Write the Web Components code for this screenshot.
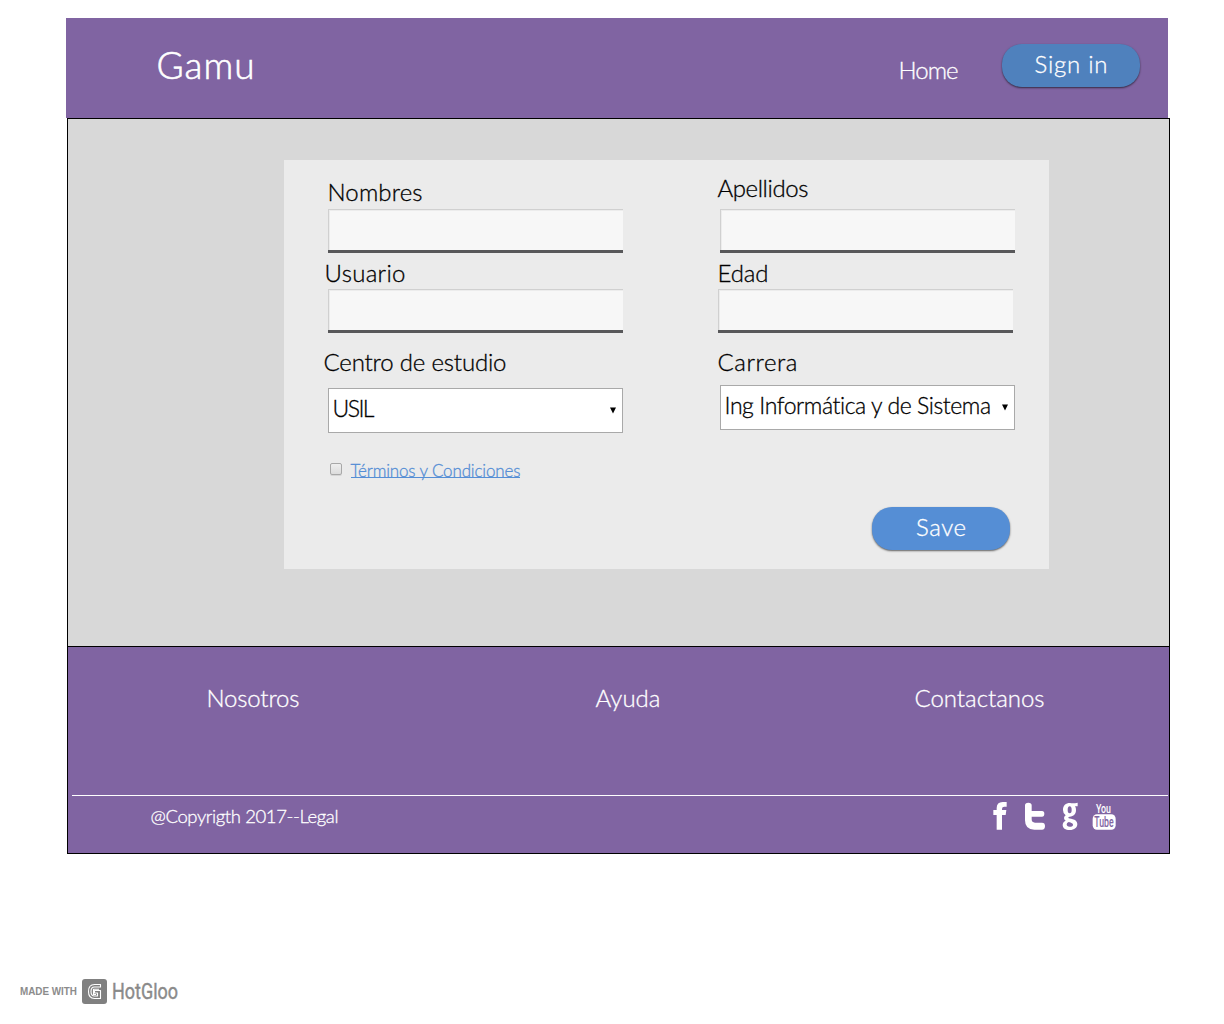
<!DOCTYPE html>
<html lang="es">
<head>
<meta charset="utf-8">
<title>Gamu</title>
<style>
html,body{margin:0;background:#fff}
body{width:1224px;height:1024px;overflow:hidden;font-family:Lato,"Open Sans",sans-serif;font-weight:300}
</style>
</head>
<body>
<gamu-page></gamu-page>
<script>
const define = (name, html, after) => customElements.define(name, class extends HTMLElement {
  connectedCallback() {
    if (this.shadowRoot) return;
    const t = document.createElement('template');
    t.innerHTML = html;
    this.attachShadow({mode:'open'}).append(t.content.cloneNode(true));
    if (after) after(this, this.shadowRoot);
  }
});

// A single line of text spread over the width given in "w".
define('fit-text', `<style>
:host{display:block;height:30px;line-height:30px;white-space:pre;font-size:24px;flex:none;-webkit-text-stroke:.3px currentColor}
:host([squeeze]){-webkit-text-stroke:0}
span{display:inline-block;transform-origin:0 50%}
</style><span><slot></slot></span>`, (host, root) => {
  const w = +host.getAttribute('w'), s = root.querySelector('span');
  if (host.hasAttribute('size')) host.style.fontSize = host.getAttribute('size') + 'px';
  host.style.width = w + 'px';
  const n = host.textContent.length, now = s.getBoundingClientRect().width;
  if (host.hasAttribute('squeeze')) s.style.transform = 'scaleX(' + w / now + ')';
  else { s.style.letterSpacing = (w + 1 - now) / (n - 1) + 'px'; s.style.marginLeft = '-.5px'; }
});

define('pill-button', `<style>
:host{display:flex;justify-content:center;width:138px;height:43px;border-radius:20px;background:var(--fill);color:#fff;box-shadow:0 1px 2px rgba(0,0,0,.6);flex:none;box-sizing:border-box;padding-top:5px}
</style><slot></slot>`);

define('line-input', `<style>
:host{display:block;width:295px;height:44px;flex:none}
div{box-sizing:border-box;height:44px;background:#f7f7f7;border-top:1px solid #d0d0d0;border-bottom:3px solid #58585a;box-shadow:inset 1px 0 0 #d0d0d0,inset 2px 1px 0 #ececec}
</style><div></div>`);

define('drop-select', `<style>
:host{display:flex;box-sizing:border-box;width:295px;height:45px;border:1px solid #a9a9a9;background:#fff;padding:4px 6px 0 4px;justify-content:space-between;flex:none}
svg{margin-top:14px}
</style><slot></slot><svg width="6" height="7"><path d="M0 .5H6L3 6.5Z" fill="#000"/></svg>`);

define('form-panel', `<style>
:host{display:flex;width:765px;height:409px;background:#ebebeb;color:#000}
.col{display:flex;flex-direction:column;align-items:flex-start}
.a{width:390px;padding-left:40px}
.b{width:295px;padding-left:4px}
.in{margin-left:4px}.in2{margin-left:2px}
.terms{display:flex;margin:22px 0 0 6px}
.box{width:10px;height:10px;border:1px solid #a8a8a8;border-radius:2px;background:linear-gradient(#efefef,#dcdcdc);margin:8px 9px 0 0;box-shadow:0 1px 0 #d5d5d5}
.link{color:#558ed5;height:22px;border-bottom:1px solid #558ed5}
.link fit-text{margin-top:1px}
.link{height:22px}
pill-button{--fill:#558ed5}
</style>
<div class="col a">
 <fit-text w="94" style="margin:17px 0 2px 4px">Nombres</fit-text>
 <line-input class="in"></line-input>
 <fit-text w="80" style="margin:5px 0 1px 1px">Usuario</fit-text>
 <line-input class="in"></line-input>
 <fit-text w="182" style="margin:14px 0 11px">Centro de estudio</fit-text>
 <drop-select class="in"><fit-text w="41" size="23">USIL</fit-text></drop-select>
 <div class="terms"><div class="box"></div><div class="link"><fit-text w="169" size="17">Términos y Condiciones</fit-text></div></div>
</div>
<div class="col b">
 <fit-text w="90" style="margin:13px 0 6px">Apellidos</fit-text>
 <line-input class="in2"></line-input>
 <fit-text w="50" style="margin:5px 0 1px">Edad</fit-text>
 <line-input></line-input>
 <fit-text w="79" style="margin:14px 0 8px">Carrera</fit-text>
 <drop-select class="in2"><fit-text w="266" size="23">Ing Informática y de Sistema</fit-text></drop-select>
 <pill-button style="margin:77px 0 0 154px"><fit-text w="49">Save</fit-text></pill-button>
</div>`);

define('top-bar', `<style>
:host{display:flex;align-items:flex-start;box-sizing:border-box;width:1102px;height:100px;margin:18px 0 0 66px;padding:26px 28px 0 91px;background:#8064a2;color:#fff}
.gap{flex:1}
pill-button{--fill:#4f81bd}
</style>
<fit-text w="97" size="37" style="margin-top:6px;-webkit-text-stroke-width:.6px">Gamu</fit-text><div class="gap"></div>
<fit-text w="59" style="margin:11px 44px 0 0">Home</fit-text>
<pill-button><fit-text w="72">Sign in</fit-text></pill-button>`);

define('social-icons', `<style>
:host{display:flex}svg{display:block;fill:#fff;flex:none;overflow:visible}
text{font-family:Roboto,"Liberation Sans",sans-serif;font-weight:500}
</style>
<svg width="16" height="32" viewBox="36 30 48 96"><path d="M50 119V75H40V60H50V54Q50 36 68 36H80V50H73Q66 50 66 57V60H79L77 75H66V119Z"/></svg>
<svg style="margin-left:16px" width="22" height="32" viewBox="132 30 66 96"><path d="M135 46Q135 38 145 38Q155 38 155 46V63H186Q193 63 193 71Q193 80 186 80H155V88Q155 98 165 98H186Q195 98 195 108Q195 119 186 119H163Q135 119 135 91Z"/></svg>
<svg style="margin-left:16px" width="17" height="32" viewBox="246 30 51 96"><path fill-rule="evenodd" d="M293 38V49H285Q288 53 288 60C288 72 281 79 269 80Q265 80 265 83C265 87 292 84 292 102C292 113 283 120 269 120C256 120 248 114 248 105Q248 96 257 92Q252 89 252 84Q252 79 257 76Q249 71 249 60C249 46 257 39 270 39Q280 41 293 38ZM269 49Q263 49 263 60Q263 70 269 70Q275 70 275 60Q275 49 269 49ZM266 96Q260 98 260 103Q260 110 269 110Q279 110 279 104Q279 99 266 96Z"/></svg>
<svg style="margin-left:12px" width="26" height="32" viewBox="333 30 78 96"><text x="348" y="68" font-size="41" textLength="45" lengthAdjust="spacingAndGlyphs">You</text><rect x="338" y="73" width="69" height="46" rx="13"/><text x="343" y="112" font-size="44" textLength="58" lengthAdjust="spacingAndGlyphs" fill="#8064a2">Tube</text></svg>`);

define('page-footer', `<style>
:host{display:block;box-sizing:border-box;width:1103px;height:208px;border:1px solid #000;background:#8064a2;color:#fff}
.links{display:flex;padding:36px 0 0 139px;height:112px}
.bottom{display:flex;justify-content:space-between;margin-left:4px;width:1096px;box-sizing:border-box;border-top:1px solid #fff;padding:4px 51px 0 79px}
</style>
<div class="links"><fit-text w="92">Nosotros</fit-text><fit-text w="64" style="margin-left:297px">Ayuda</fit-text><fit-text w="129" style="margin-left:255px">Contactanos</fit-text></div>
<div class="bottom"><fit-text w="187" size="18.5" style="margin-top:1px">@Copyrigth 2017--Legal</fit-text><social-icons></social-icons></div>`);

define('made-with', `<style>
:host{display:flex;margin:125px 0 0 20px;height:25px;color:#8c8c8c;font-family:"Liberation Sans",sans-serif;font-weight:700}
svg{display:block;margin:0 5px}
.name{font-family:Roboto,sans-serif;font-weight:400;-webkit-text-stroke:.4px #868686}
</style>
<fit-text w="57" size="10" squeeze style="margin-top:-2px">MADE WITH</fit-text>
<svg width="25" height="25" viewBox="0 0 25 25"><rect width="25" height="25" rx="3" fill="#808080"/><g fill="none" stroke="#fff" stroke-width="1.1" stroke-linejoin="round"><path d="M18.500 8.500V5.500H12.500Q6.500 5.500 6.500 12.500Q6.500 19.500 12.500 19.500H18.500V11.500H12.500V14H15.500V17H12.500Q9 17 9 12.500Q9 8 12.500 8H18.500"/><path d="M17 10.300H11.500V15.500H14"/></g></svg>
<fit-text class="name" w="66" size="22" squeeze style="margin-top:-2px">HotGloo</fit-text>`);

define('gamu-page', `<style>
:host{display:flow-root}
main{box-sizing:border-box;width:1103px;height:528px;margin-left:67px;border:1px solid #000;border-bottom:0;background:#d8d8d8;padding:41px 0 0 216px}
page-footer{margin-left:67px}
</style>
<top-bar></top-bar><main><form-panel></form-panel></main><page-footer></page-footer><made-with></made-with>`);
</script>
</body>
</html>
